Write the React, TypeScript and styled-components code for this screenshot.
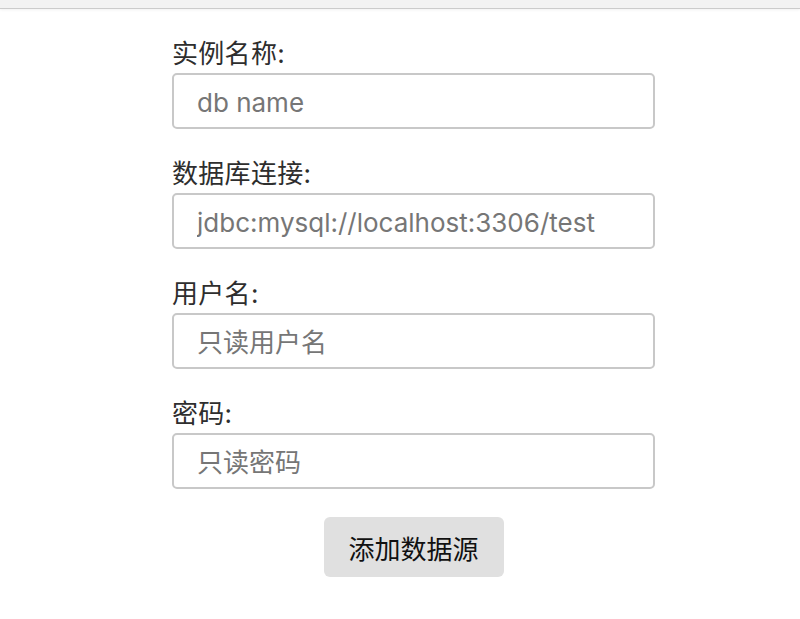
import React from "react";
import styled, { createGlobalStyle } from "styled-components";

const GlobalStyle = createGlobalStyle`
  html, body {
    margin: 0;
    padding: 0;
    background: #ffffff;
  }
  body {
    font-family: Inter, "Noto Sans CJK SC", sans-serif;
  }
  * { box-sizing: border-box; }
`;

const TopBar = styled.div`
  height: 9px;
  background: #f2f2f2;
  border-bottom: 1px solid #cbcbcb;
  box-shadow: 0 1px 3px rgba(0, 0, 0, 0.06);
`;

const Page = styled.div`
  display: flex;
  justify-content: flex-start;
  padding: 31px 0 0 172px;
`;

const Form = styled.form`
  width: 483px;
  display: flex;
  flex-direction: column;
  gap: 31px;
`;

const Field = styled.div`
  display: flex;
  flex-direction: column;
  gap: 5px;
`;

const Label = styled.label`
  font-family: Inter, "Noto Sans CJK SC", sans-serif;
  font-size: 26px;
  line-height: 28px;
  letter-spacing: 0.3px;
  color: #2e2e2e;
`;

const Input = styled.input`
  width: 100%;
  height: 56px;
  padding: 2px 0 0 23px;
  border: 2px solid #c8c8c8;
  border-radius: 5px;
  font-family: Inter, "Noto Sans CJK SC", sans-serif;
  font-size: 26px;
  color: #333;
  background: #fff;
  outline: none;
  &::placeholder {
    color: #767676;
  }
`;

const Actions = styled.div`
  display: flex;
  justify-content: center;
  margin-top: -3px;
`;

const Button = styled.button`
  width: 180px;
  height: 60px;
  padding: 0;
  border: none;
  border-radius: 6px;
  background: #e0e0e0;
  font-family: Inter, "Noto Sans CJK SC", sans-serif;
  font-size: 26px;
  color: #111;
  cursor: pointer;
`;

const fields = [
  { label: "实例名称:", placeholder: "db name", type: "text" },
  { label: "数据库连接:", placeholder: "jdbc:mysql://localhost:3306/test", type: "text" },
  { label: "用户名:", placeholder: "只读用户名", type: "text" },
  { label: "密码:", placeholder: "只读密码", type: "password" },
];

export default function App() {
  return (
    <>
      <GlobalStyle />
      <TopBar />
      <Page>
        <Form onSubmit={(e) => e.preventDefault()}>
          {fields.map((f) => (
            <Field key={f.label}>
              <Label>{f.label}</Label>
              <Input type={f.type} placeholder={f.placeholder} />
            </Field>
          ))}
          <Actions>
            <Button type="submit">添加数据源</Button>
          </Actions>
        </Form>
      </Page>
    </>
  );
}
